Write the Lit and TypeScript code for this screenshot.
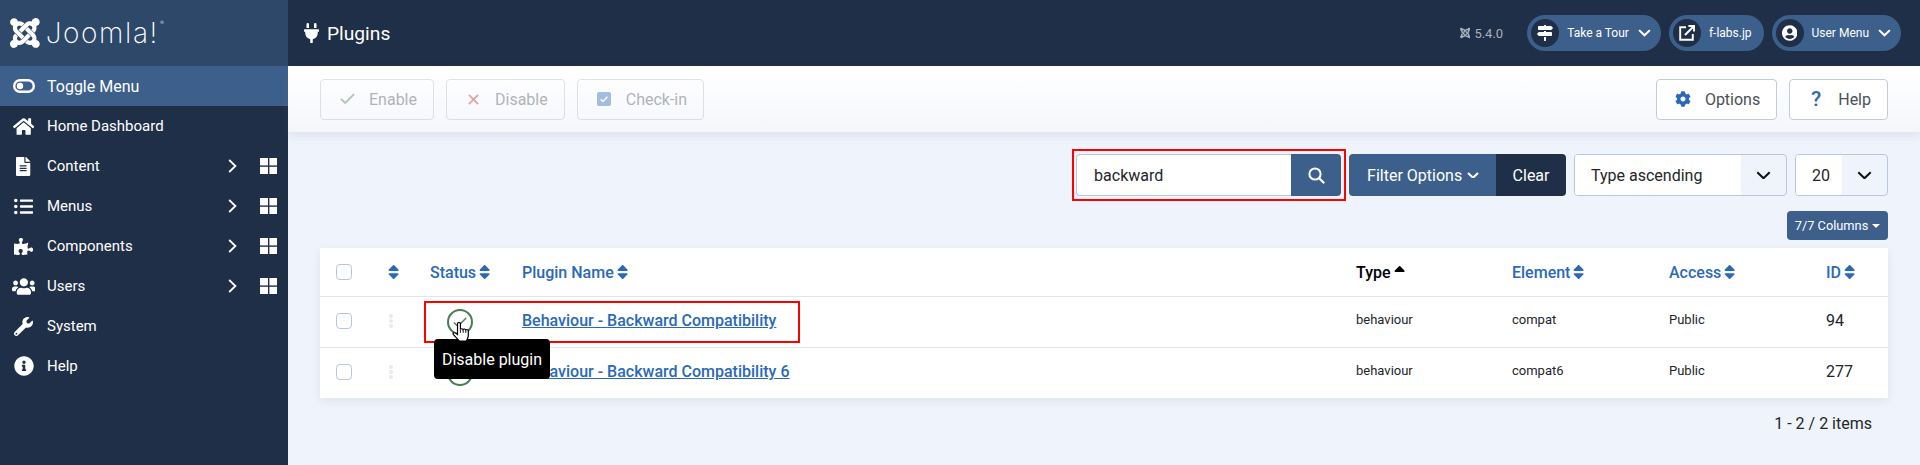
import { LitElement, html, css, svg } from 'lit'
import { customElement } from 'lit/decorators.js'

const P = {
  joomla: ['0 0 448 512', 'M.6 92.1C.6 58.8 27.4 32 60.4 32c30 0 54.5 21.9 59.2 50.2 32.6-7.6 67.1.6 96.5 30l-44.3 44.3c-20.5-20.5-42.6-16.3-55.4-3.5-14.3 14.3-14.3 37.9 0 52.2l99.5 99.5-44 44.3c-87.7-87.2-49.7-49.7-99.8-99.7-26.8-26.5-35-64.8-24.8-98.9C20.4 144.6.6 120.7.6 92.1zm129.5 116.4l44.3 44.3c10-10 89.7-89.7 99.7-99.8 14.3-14.3 37.6-14.3 51.9 0 12.8 12.8 17 35-3.5 55.4l44 44.3c31.2-31.2 38.5-67.6 28.9-101.2 29.2-4.1 51.9-29.2 51.9-59.5 0-33.2-26.8-60.1-59.8-60.1-30.3 0-55.4 22.5-59.5 51.6-33.8-9.9-71.7-1.5-98.3 25.1-18.7 19-91.6 91.3-99.6 99.6zm266.3 152.2c8.2-32.7-.9-68.5-26.3-93.9-11.8-12.2 5 4.7-99.5-99.7l-44.3 44.3 99.7 99.7c14.3 14.3 14.3 37.6 0 51.9-12.8 12.8-35 17-55.4-3.5l-44 44.3c27.6 30.2 68 38.8 102.7 28 5.5 27.4 29.7 48.1 58.9 48.1 33 0 59.8-26.8 59.8-60.1 0-30.2-22.5-55-52.6-59.1zm-84.3-53.1l-44-44.3c-87 86.4-50.4 50.4-99.7 99.8-14.3 14.3-37.6 14.3-51.9 0-13.1-13.4-16.9-35.3 3.2-55.4l-44-44.3c-30.2 30.2-38 65.2-29.5 98.3-26.7 6-46.2 29.9-46.2 58.2C0 453.2 26.8 480 59.8 480c28.6 0 52.5-19.8 58.6-46.7 32.7 8.2 68.5-.6 94.2-26 32.1-32 12.2-12.4 99.5-99.7z'],
  plug: ['0 0 384 512', 'M320,32a32,32,0,0,0-64,0v96h64Zm48,128H16A16,16,0,0,0,0,176v32a16,16,0,0,0,16,16H32v32A160.07,160.07,0,0,0,160,412.8V512h64V412.8A160.07,160.07,0,0,0,352,256V224h16a16,16,0,0,0,16-16V176A16,16,0,0,0,368,160ZM128,32a32,32,0,0,0-64,0v96h64Z'],
  home: ['0 0 576 512', 'M280.37 148.26L96 300.11V464a16 16 0 0 0 16 16l112.06-.29a16 16 0 0 0 15.92-16V368a16 16 0 0 1 16-16h64a16 16 0 0 1 16 16v95.64a16 16 0 0 0 16 16.05L464 480a16 16 0 0 0 16-16V300L295.67 148.26a12.19 12.19 0 0 0-15.3 0zM571.6 251.47L488 182.56V44.05a12 12 0 0 0-12-12h-56a12 12 0 0 0-12 12v72.61L318.47 43a48 48 0 0 0-61 0L4.34 251.47a12 12 0 0 0-1.6 16.9l25.5 31A12 12 0 0 0 45.15 301l235.22-193.74a12.19 12.19 0 0 1 15.3 0L530.9 301a12 12 0 0 0 16.9-1.6l25.5-31a12 12 0 0 0-1.7-16.93z'],
  file: ['0 0 384 512', 'M224 136V0H24C10.7 0 0 10.7 0 24v464c0 13.3 10.7 24 24 24h336c13.3 0 24-10.7 24-24V160H248c-13.2 0-24-10.8-24-24zm64 236c0 6.6-5.4 12-12 12H108c-6.6 0-12-5.4-12-12v-8c0-6.6 5.4-12 12-12h168c6.6 0 12 5.4 12 12v8zm0-64c0 6.6-5.4 12-12 12H108c-6.6 0-12-5.4-12-12v-8c0-6.6 5.4-12 12-12h168c6.6 0 12 5.4 12 12v8zm0-72v8c0 6.6-5.4 12-12 12H108c-6.6 0-12-5.4-12-12v-8c0-6.6 5.4-12 12-12h168c6.6 0 12 5.4 12 12zm96-114.1v6.1H256V0h6.1c6.4 0 12.5 2.5 17 7l97.9 98c4.5 4.5 7 10.6 7 16.9z'],
  list: ['0 0 512 512', 'M48 48a48 48 0 1 0 48 48 48 48 0 0 0-48-48zm0 160a48 48 0 1 0 48 48 48 48 0 0 0-48-48zm0 160a48 48 0 1 0 48 48 48 48 0 0 0-48-48zm448 16H176a16 16 0 0 0-16 16v32a16 16 0 0 0 16 16h320a16 16 0 0 0 16-16v-32a16 16 0 0 0-16-16zm0-320H176a16 16 0 0 0-16 16v32a16 16 0 0 0 16 16h320a16 16 0 0 0 16-16V80a16 16 0 0 0-16-16zm0 160H176a16 16 0 0 0-16 16v32a16 16 0 0 0 16 16h320a16 16 0 0 0 16-16v-32a16 16 0 0 0-16-16z'],
  puzzle: ['0 0 576 512', 'M519.442 288.651c-41.519 0-59.5 31.593-82.058 31.593C377.409 320.244 432 144 432 144s-196.288 80-196.288-3.297c0-35.827 36.288-46.25 36.288-85.985C272 19.216 243.885 0 210.539 0c-34.654 0-66.366 18.891-66.366 56.346 0 41.364 31.711 59.277 31.711 81.75C175.885 207.719 0 166.758 0 166.758v333.237s178.635 41.047 178.635-28.662c0-22.473-40-40.107-40-81.471 0-37.456 29.25-56.346 63.577-56.346 33.673 0 61.788 19.216 61.788 54.717 0 39.735-36.288 50.158-36.288 85.985 0 60.803 129.675 25.73 181.23 25.73 0 0-34.725-120.101 25.827-120.101 35.962 0 46.423 36.152 86.308 36.152C556.712 416 576 387.99 576 354.443c0-34.199-18.962-65.792-56.558-65.792z'],
  users: ['0 0 640 512', 'M96 224c35.3 0 64-28.7 64-64s-28.7-64-64-64-64 28.7-64 64 28.7 64 64 64zm448 0c35.3 0 64-28.7 64-64s-28.7-64-64-64-64 28.7-64 64 28.7 64 64 64zm32 32h-64c-17.6 0-33.5 7.1-45.1 18.6 40.3 22.1 68.9 62 75.1 109.4h66c17.7 0 32-14.3 32-32v-32c0-35.3-28.7-64-64-64zm-256 0c61.9 0 112-50.1 112-112S381.9 32 320 32 208 82.1 208 144s50.1 112 112 112zm76.8 32h-8.3c-20.8 10-43.9 16-68.5 16s-47.6-6-68.5-16h-8.3C179.6 288 128 339.6 128 403.2V432c0 26.5 21.5 48 48 48h288c26.5 0 48-21.5 48-48v-28.8c0-63.6-51.6-115.2-115.2-115.2zm-223.7-13.4C161.5 263.1 145.6 256 128 256H64c-35.3 0-64 28.7-64 64v32c0 17.7 14.3 32 32 32h65.9c6.3-47.4 34.9-87.3 75.2-109.4z'],
  wrench: ['0 0 512 512', 'M507.73 109.1c-2.24-9.03-13.54-12.09-20.12-5.51l-74.36 74.36-67.88-11.31-11.31-67.88 74.36-74.36c6.62-6.62 3.43-17.9-5.66-20.16-47.38-11.74-99.55.91-136.58 37.93-39.64 39.64-50.55 97.1-34.05 147.2L18.74 402.76c-24.99 24.99-24.99 65.51 0 90.5 24.99 24.99 65.51 24.99 90.5 0l213.21-213.21c50.12 16.71 107.47 5.68 147.37-34.22 37.07-37.07 49.7-89.32 37.91-136.73zM64 472c-13.25 0-24-10.75-24-24 0-13.26 10.75-24 24-24s24 10.74 24 24c0 13.25-10.75 24-24 24z'],
  info: ['0 0 512 512', 'M256 8C119.043 8 8 119.083 8 256c0 136.997 111.043 248 248 248s248-111.003 248-248C504 119.083 392.957 8 256 8zm0 110c23.196 0 42 18.804 42 42s-18.804 42-42 42-42-18.804-42-42 18.804-42 42-42zm56 254c0 6.627-5.373 12-12 12h-88c-6.627 0-12-5.373-12-12v-24c0-6.627 5.373-12 12-12h12v-64h-12c-6.627 0-12-5.373-12-12v-24c0-6.627 5.373-12 12-12h64c6.627 0 12 5.373 12 12v100h12c6.627 0 12 5.373 12 12v24z'],
  cog: ['0 0 512 512', 'M487.4 315.7l-42.6-24.6c4.3-23.2 4.3-47 0-70.2l42.6-24.6c4.9-2.8 7.1-8.6 5.5-14-11.1-35.6-30-67.8-54.7-94.6-3.8-4.1-10-5.1-14.8-2.3L380.8 110c-17.9-15.4-38.5-27.3-60.8-35.1V25.8c0-5.6-3.9-10.5-9.4-11.7-36.7-8.2-74.3-7.8-109.2 0-5.5 1.2-9.4 6.1-9.4 11.7V75c-22.2 7.9-42.8 19.8-60.8 35.1L88.7 85.5c-4.9-2.8-11-1.9-14.8 2.3-24.7 26.7-43.6 58.9-54.7 94.6-1.7 5.4.6 11.2 5.5 14L67.3 221c-4.3 23.2-4.3 47 0 70.2l-42.6 24.6c-4.9 2.8-7.1 8.6-5.5 14 11.1 35.6 30 67.8 54.7 94.6 3.8 4.1 10 5.1 14.8 2.3l42.6-24.6c17.9 15.4 38.5 27.3 60.8 35.1v49.2c0 5.6 3.9 10.5 9.4 11.7 36.7 8.2 74.3 7.8 109.2 0 5.5-1.2 9.4-6.1 9.4-11.7v-49.2c22.2-7.9 42.8-19.8 60.8-35.1l42.6 24.6c4.9 2.8 11 1.9 14.8-2.3 24.7-26.7 43.6-58.9 54.7-94.6 1.5-5.5-.7-11.3-5.6-14.1zM256 336c-44.1 0-80-35.9-80-80s35.9-80 80-80 80 35.9 80 80-35.9 80-80 80z'],
  user: ['0 0 496 512', 'M248 8C111 8 0 119 0 256s111 248 248 248 248-111 248-248S385 8 248 8zm0 96c48.6 0 88 39.4 88 88s-39.4 88-88 88-88-39.4-88-88 39.4-88 88-88zm0 344c-58.7 0-111.3-26.6-146.5-68.2 18.8-35.4 55.6-59.8 98.5-59.8 2.4 0 4.8.4 7.1 1.1 13 4.2 26.6 6.9 40.9 6.9 14.3 0 28-2.7 40.9-6.9 2.3-.7 4.7-1.1 7.1-1.1 42.9 0 79.7 24.4 98.5 59.8C359.3 421.4 306.7 448 248 448z'],
  signs: ['0 0 512 512', 'M507.31 84.69L464 41.37c-6-6-14.14-9.37-22.63-9.37H288V16c0-8.84-7.16-16-16-16h-32c-8.84 0-16 7.16-16 16v16H56c-13.25 0-24 10.75-24 24v80c0 13.25 10.75 24 24 24h385.37c8.49 0 16.62-3.37 22.63-9.37l43.31-43.31c6.25-6.26 6.25-16.38 0-22.63zM224 496c0 8.84 7.16 16 16 16h32c8.84 0 16-7.16 16-16V384h-64v112zm232-272H288v-32h-64v32H70.63c-8.49 0-16.62 3.37-22.63 9.37L4.69 276.69c-6.25 6.25-6.25 16.38 0 22.63L48 342.63c6 6 14.14 9.37 22.63 9.37H456c13.25 0 24-10.75 24-24v-80c0-13.25-10.75-24-24-24z'],
  sort: ['0 0 320 512', 'M41 288h238c21.4 0 32.1 25.9 17 41L177 448c-9.4 9.4-24.6 9.4-33.9 0L24 329c-15.1-15.1-4.4-41 17-41zm255-105L177 64c-9.4-9.4-24.6-9.4-33.9 0L24 183c-15.1 15.1-4.4 41 17 41h238c21.4 0 32.1-25.9 17-41z'],
  sortUp: ['0 0 320 512', 'M279 224H41c-21.4 0-32.1-25.9-17-41L143 64c9.4-9.4 24.6-9.4 33.9 0l119 119c15.2 15.1 4.5 41-16.9 41z'],
}

const icon = (name: keyof typeof P, size: number) => html`
  <svg class="ic ${name}" viewBox=${P[name][0]} style="height:${size}px" fill="currentColor"><path d=${P[name][1]}></path></svg>
`

// thin stroke glyphs
const chevron = (w: number, sw: number) => html`
  <svg class="ic" viewBox="0 0 14 8" style="width:${w}px" fill="none" stroke="currentColor" stroke-width=${sw}><path d="M1.2 1.2 7 6.8l5.8-5.6"></path></svg>
`
const chevronRight = html`
  <svg class="ic" viewBox="0 0 9 14" style="width:9px" fill="none" stroke="currentColor" stroke-width="1.8"><path d="M1.2 1 7.4 7l-6.2 6"></path></svg>
`
const gridIcon = html`
  <svg class="ic" viewBox="0 0 17 16" style="width:17px" fill="currentColor">
    ${svg`<rect width="8" height="7.4"></rect><rect x="9.4" width="7.6" height="7.4"></rect><rect y="8.8" width="8" height="7.2"></rect><rect x="9.4" y="8.8" width="7.6" height="7.2"></rect>`}
  </svg>
`
const toggleIcon = html`
  <svg class="ic" viewBox="0 0 22 14" style="width:22px" fill="none">
    ${svg`<rect x="1.2" y="1.2" width="19.6" height="11.6" rx="5.8" stroke="currentColor" stroke-width="2.4"></rect><circle cx="7" cy="7" r="3.2" fill="currentColor"></circle>`}
  </svg>
`
const newTab = html`
  <svg class="ic" viewBox="0 0 16 16" style="width:16px" fill="none" stroke="currentColor" stroke-width="1.9">
    ${svg`<path d="M7 2.2H1.2v12.6h12.6V9"></path><path d="M6 10l8-8"></path><path d="M9.4 1h5.6v5.6"></path>`}
  </svg>
`
const searchIcon = html`
  <svg class="ic" viewBox="0 0 17 17" style="width:17px" fill="none" stroke="currentColor" stroke-width="2">
    ${svg`<circle cx="7" cy="7" r="5.6"></circle><path d="M11 11l5.2 5.2" stroke-width="2.2"></path>`}
  </svg>
`
const thinCheck = (w: number, sw: number) => html`
  <svg class="ic" viewBox="0 0 16 12" style="width:${w}px" fill="none" stroke="currentColor" stroke-width=${sw}><path d="M1 6.2 5.6 10.6 15 1.2"></path></svg>
`
const thinX = html`
  <svg class="ic" viewBox="0 0 12 12" style="width:11px" fill="none" stroke="currentColor" stroke-width="1.9"><path d="M1 1l10 10M11 1 1 11"></path></svg>
`
const checkBox = html`
  <svg class="ic" viewBox="0 0 14 14" style="width:14px">
    ${svg`<rect width="14" height="14" rx="2" fill="#2a69b8"></rect><path d="M3.6 7.2 6 9.4l4.4-4.6" fill="none" stroke="#fff" stroke-width="1.5"></path>`}
  </svg>
`
const pointer = html`
  <svg class="cursor" viewBox="0 0 15 19.5" preserveAspectRatio="none" fill="#fff" stroke="#000" stroke-width="1">
    <path d="M4.6 1.6c0-1.5 2.4-1.5 2.4 0v5.6c.5-1 2.1-1 2.3.2.5-.9 2.1-.8 2.2.4.6-.7 2.1-.5 2.1.8V13c0 2.2-1 3.2-1.4 5.6H6.2L1.2 12.3c-.9-1.2.6-2.5 1.8-1.5l1.6 1.5z"></path>
    <path d="M7 7.4v3.2M9.3 7.6v3M11.5 8v2.6" fill="none" stroke-width=".8"></path>
  </svg>
`

const menu = [
  { label: 'Home Dashboard', ic: 'home', s: 19 },
  { label: 'Content', ic: 'file', s: 19 },
  { label: 'Menus', ic: 'list', s: 19 },
  { label: 'Components', ic: 'puzzle', s: 17 },
  { label: 'Users', ic: 'users', s: 19 },
  { label: 'System', ic: 'wrench', s: 19 },
  { label: 'Help', ic: 'info', s: 20 },
] as const
const withSub = ['Content', 'Menus', 'Components', 'Users']

const rows = [
  { name: 'Behaviour - Backward Compatibility', el: 'compat', id: '94' },
  { name: 'Behaviour - Backward Compatibility 6', el: 'compat6', id: '277' },
]

@customElement('app-root')
export class AppRoot extends LitElement {
  static styles = css`
    :host {
      display: grid;
      grid-template-columns: 288px 1fr;
      height: 465px;
      overflow: hidden;
      position: relative;
      font-family: Roboto, sans-serif;
      font-size: 16px;
      color: #22262a;
      background: #eff3fb;
    }
    .ic { display: block; flex: none; }

    /* sidebar */
    .side { background: #1f2f48; color: #fff; }
    .logo {
      height: 66px;
      background: #2d4869;
      display: flex; align-items: center;
      padding-left: 10px; gap: 6px;
    }
    .logo-text {
      font-family: Inter, sans-serif;
      font-weight: 200;
      font-size: 28px;
      letter-spacing: 1.6px;
      line-height: 1;
      position: relative;
    }
    .logo-text sup { font-size: 6px; position: absolute; top: 1px; right: -5px; letter-spacing: 0; }
    .nav { display: flex; align-items: center; height: 40px; padding-left: 13px; font-size: 15px; }
    .nav.toggle { background: #3d5f8c; font-size: 16px; }
    .nav .slot { width: 21px; margin-right: 13px; display: flex; justify-content: center; flex: none; }
    .nav .label { flex: 1; }
    .nav .arrow { margin-right: 23px; }
    .nav .tiles { margin-right: 11px; }

    /* header */
    .main { display: flex; flex-direction: column; min-width: 0; }
    .head {
      height: 66px; background: #1f2f48; color: #fff;
      display: flex; align-items: center;
      padding: 0 19px 0 16px;
    }
    .title { display: flex; align-items: center; gap: 8px; font-size: 19.2px; flex: 1; }
    .ver { display: flex; align-items: center; gap: 4px; font-size: 13px; color: #a9b0bc; margin-right: 24px; }
    .pills { display: flex; gap: 8px; }
    .pill {
      height: 36px; border-radius: 18px; background: #3d5f8c;
      display: flex; align-items: center;
      padding: 0 10px 0 4px; font-size: 12px;
    }
    .pill .disc {
      width: 28px; height: 28px; border-radius: 50%; background: #1f2f48;
      display: flex; align-items: center; justify-content: center;
      margin-right: 8px;
    }
    .pill .name { margin-right: 9px; }
    .pill .name.last { margin-right: 2px; }

    /* toolbar */
    .bar {
      height: 66px;
      background: linear-gradient(#fff 10%, #f4f6fb);
      box-shadow: 0 4px 8px rgba(100, 120, 160, .12);
      display: flex; align-items: center; gap: 12px;
      padding: 0 32px;
      position: relative;
    }
    .btn {
      height: 41px; box-sizing: border-box;
      display: flex; align-items: center;
      border: 1px solid #c3cbd9; border-radius: 4px;
      background: #fff; padding: 0 16px 0 18px;
      color: #495057;
    }
    .btn .slot { width: 16px; margin-right: 14px; display: flex; justify-content: center; }
    .btn.off { opacity: .42; background: transparent; border-color: #b4bccb; }
    .btn.off .g { color: #457d54; }
    .btn.off .r { color: #c52827; }
    .spacer { flex: 1; }
    .blue { color: #2a69b8; }
    .q { font-size: 21px; font-weight: 500; line-height: 1; }

    /* content */
    .content { padding: 22px 32px 0; }
    .filters { display: flex; justify-content: flex-end; height: 42px; }
    .search { display: flex; width: 265px; margin-right: 8px; }
    .search input {
      flex: 1; min-width: 0; box-sizing: border-box; height: 42px;
      border: 1px solid #b8c6dd; border-right: 0; border-radius: 4px 0 0 4px;
      padding: 0 17px; font: 16px Roboto, sans-serif; color: #22262a;
      background: #fff; outline: none;
    }
    .search button {
      width: 50px; border: 0; padding: 0; background: #3d5f8c; color: #fff;
      border-radius: 0 4px 4px 0;
      display: flex; align-items: center; justify-content: center;
    }
    .fbtn {
      display: flex; align-items: center; gap: 5px; color: #fff; width: 147px; box-sizing: border-box;
      background: #3d5f8c; padding: 0 0 0 18px; border-radius: 4px 0 0 4px;
    }
    .clear {
      display: flex; align-items: center; color: #fff; background: #1f2f48;
      padding: 0 16.5px; border-radius: 0 4px 4px 0; margin-right: 8px;
    }
    .select {
      box-sizing: border-box; display: flex; height: 42px;
      border: 1px solid #b8c6dd; border-radius: 4px; overflow: hidden;
    }
    .select .val { background: #fff; display: flex; align-items: center; }
    .select .drop { flex: 1; display: flex; align-items: center; justify-content: center; color: #111; }
    .select.sort { width: 213px; margin-right: 8px; }
    .select.sort .val { width: 166px; padding-left: 16px; box-sizing: border-box; }
    .select.limit { width: 93px; }
    .select.limit .val { width: 46px; box-sizing: border-box; padding-left: 16px; }

    .cols { display: flex; justify-content: flex-end; margin: 15px 0 8px; }
    .cols span {
      height: 29px; width: 101px; background: #3d5f8c; color: #fff;
      border-radius: 4px; font-size: 12.8px;
      display: flex; align-items: center; justify-content: center; gap: 4px;
    }
    .cols i { border: 4px solid transparent; border-top-color: #fff; border-bottom: 0; }

    table {
      width: 1568px; table-layout: fixed; border-collapse: separate; border-spacing: 0;
      background: #fff; box-shadow: 0 3px 8px rgba(100, 120, 160, .12);
    }
    th, td { padding: 0 16px; text-align: left; white-space: nowrap; border-bottom: 1px solid #e3e5ea; }
    tr:last-child td { border-bottom: 0; }
    thead tr { height: 49px; }
    tbody tr { height: 51px; }
    tbody tr:last-child { height: 50px; }
    th { font-weight: 500; color: #2a69b8; }
    th .h { display: flex; align-items: center; gap: 3px; }
    th .sort { margin-top: -1px; }
    th .sortUp { margin-top: 2px; }
    th.cur { color: #000; }
    td { padding-bottom: 3px; }
    td.sm { font-size: 13px; padding-bottom: 5px; }
    .box { display: block; width: 16px; height: 16px; box-sizing: border-box; border: 1px solid #b8c6dd; border-radius: 4px; background: #fff; }
    .grip { display: flex; flex-direction: column; gap: 1px; width: 4px; margin-left: 1px; }
    .grip i { width: 4px; height: 4px; border-radius: 50%; background: #e7e9ed; }
    td.statuscell { padding-bottom: 0; }
    .status {
      width: 26px; height: 26px; box-sizing: border-box; border-radius: 50%;
      border: 2px solid #457d54; color: #457d54; margin-left: 17px;
      display: flex; align-items: center; justify-content: center;
    }
    a { color: #2a69b8; text-decoration: underline; font-weight: 500; }
    .foot { text-align: right; padding: 16px 16px 0 0; line-height: 20px; }

    /* overlays */
    .tip {
      position: absolute; left: 434px; top: 339px; width: 116px; height: 40px;
      background: #000; color: #fff; border-radius: 4px;
      display: flex; align-items: center; justify-content: center;
      z-index: 2;
    }
    .cursor { position: absolute; left: 452px; top: 322px; width: 18px; height: 20px; z-index: 3; }
    .mark { position: absolute; border: 2px solid #f00; box-sizing: border-box; pointer-events: none; }
    .mark.a { left: 1072px; top: 149px; width: 274px; height: 52px; }
    .mark.b { left: 424px; top: 301px; width: 376px; height: 42px; }
  `

  render() {
    return html`
      <aside class="side">
        <div class="logo">
          <span style="color:#fff">${icon('joomla', 34)}</span>
          <span class="logo-text">Joomla!<sup>®</sup></span>
        </div>
        <div class="nav toggle">
          <span class="slot">${toggleIcon}</span><span class="label">Toggle Menu</span>
        </div>
        ${menu.map(m => html`
          <div class="nav">
            <span class="slot">${icon(m.ic, m.s)}</span>
            <span class="label">${m.label}</span>
            ${withSub.includes(m.label) ? html`<span class="arrow">${chevronRight}</span><span class="tiles">${gridIcon}</span>` : ''}
          </div>
        `)}
      </aside>
      <div class="main">
        <header class="head">
          <div class="title">${icon('plug', 20)}<span>Plugins</span></div>
          <div class="ver">${icon('joomla', 12)}<span>5.4.0</span></div>
          <div class="pills">
            <div class="pill"><span class="disc">${icon('signs', 16)}</span><span class="name">Take a Tour</span>${chevron(13, 2.2)}</div>
            <div class="pill"><span class="disc">${newTab}</span><span class="name last">f-labs.jp</span></div>
            <div class="pill"><span class="disc">${icon('user', 16)}</span><span class="name">User Menu</span>${chevron(13, 2.2)}</div>
          </div>
        </header>
        <div class="bar">
          <div class="btn off"><span class="slot g">${thinCheck(15, 1.9)}</span>Enable</div>
          <div class="btn off"><span class="slot r">${thinX}</span>Disable</div>
          <div class="btn off"><span class="slot">${checkBox}</span>Check-in</div>
          <div class="spacer"></div>
          <div class="btn"><span class="slot blue">${icon('cog', 16)}</span>Options</div>
          <div class="btn"><span class="slot blue q">?</span>Help</div>
        </div>
        <div class="content">
          <div class="filters">
            <div class="search">
              <input value="backward" />
              <button>${searchIcon}</button>
            </div>
            <div class="fbtn">Filter Options ${chevron(12, 2.4)}</div>
            <div class="clear">Clear</div>
            <div class="select sort"><div class="val">Type ascending</div><div class="drop">${chevron(15, 1.9)}</div></div>
            <div class="select limit"><div class="val">20</div><div class="drop">${chevron(15, 1.9)}</div></div>
          </div>
          <div class="cols"><span>7/7 Columns <i></i></span></div>
          <table>
            <colgroup>
              <col style="width:52px" /><col style="width:42px" /><col style="width:92px" /><col style="width:834px" />
              <col style="width:156px" /><col style="width:157px" /><col style="width:157px" /><col style="width:78px" />
            </colgroup>
            <thead>
              <tr>
                <th><span class="box"></span></th>
                <th><span class="h">${icon('sort', 18)}</span></th>
                <th><span class="h">Status ${icon('sort', 18)}</span></th>
                <th><span class="h">Plugin Name ${icon('sort', 18)}</span></th>
                <th class="cur"><span class="h">Type ${icon('sortUp', 18)}</span></th>
                <th><span class="h">Element ${icon('sort', 18)}</span></th>
                <th><span class="h">Access ${icon('sort', 18)}</span></th>
                <th><span class="h">ID ${icon('sort', 18)}</span></th>
              </tr>
            </thead>
            <tbody>
              ${rows.map(r => html`
                <tr>
                  <td><span class="box"></span></td>
                  <td><span class="grip"><i></i><i></i><i></i></span></td>
                  <td class="statuscell"><span class="status">${thinCheck(14, 1.6)}</span></td>
                  <td><a>${r.name}</a></td>
                  <td class="sm">behaviour</td>
                  <td class="sm">${r.el}</td>
                  <td class="sm">Public</td>
                  <td>${r.id}</td>
                </tr>
              `)}
            </tbody>
          </table>
          <div class="foot">1 - 2 / 2 items</div>
        </div>
      </div>
      <div class="mark a"></div>
      <div class="mark b"></div>
      <div class="tip">Disable plugin</div>
      ${pointer}
    `
  }
}
